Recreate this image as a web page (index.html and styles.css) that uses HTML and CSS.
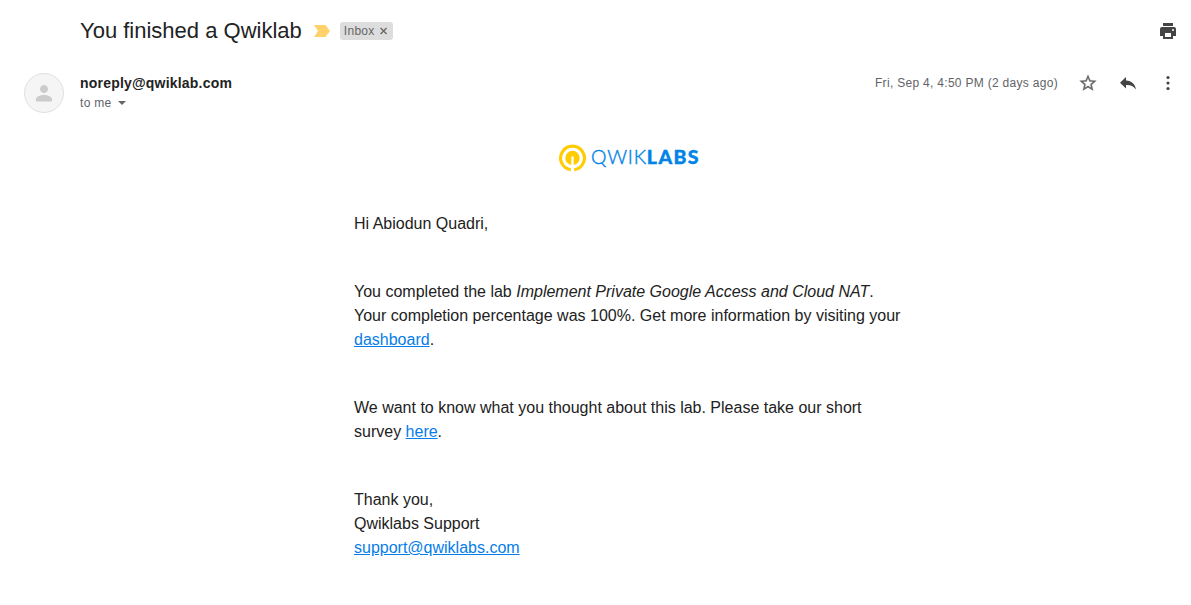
FILE: index.html
```html
<!DOCTYPE html>
<html lang="en">
<head>
<meta charset="utf-8">
<title>You finished a Qwiklab</title>
<link rel="stylesheet" href="styles.css">
</head>
<body>
<header class="subject">
  <h1>You finished a Qwiklab</h1>
  <svg class="marker" width="16" height="12" viewBox="0 0 16 12"><path d="M0 0h11.500L16 6l-4.500 6H0l4-6z" fill="#ffd26b"/></svg>
  <span class="label">Inbox <svg width="8" height="8" viewBox="0 0 8 8"><path d="M.6 1l6 6M6.600 1l-6 6" stroke="#666" stroke-width="1.300"/></svg></span>
  <svg class="print" width="20" height="20" viewBox="0 0 20 20"><path fill="#444" fill-rule="evenodd" d="M5 2h10v3H5zM4 6h12q2 0 2 2v7h-3v3H5v-3H2V8q0-2 2-2zM7 12v4h6v-4z"/><path fill="#ccc" d="M14 8h2v2h-2z"/></svg>
</header>
<section class="sender">
  <span class="avatar"><svg width="24" height="24" viewBox="0 0 24 24"><path fill="#ccc" d="M12 12c2.210 0 4-1.790 4-4s-1.790-4-4-4-4 1.790-4 4 1.790 4 4 4zm0 2c-2.670 0-8 1.340-8 4v2.500h16v-2.500c0-2.660-5.330-4-8-4z"/></svg></span>
  <div class="who">
    <strong>noreply@qwiklab.com</strong>
    <div class="to">to me <i class="caret"></i></div>
  </div>
  <div class="meta">
    <time>Fri, Sep 4, 4:50 PM (2 days ago)</time>
    <svg width="20" height="20" viewBox="0 0 24 24"><path fill="#666" stroke="#666" stroke-width=".3" d="M22 9.240l-7.190-.62L12 2 9.190 8.630 2 9.240l5.460 4.730L5.820 21 12 17.270 18.180 21l-1.630-7.030L22 9.240zM12 15.400l-3.760 2.270 1-4.280-3.320-2.880 4.380-.38L12 6.100l1.710 4.040 4.380.38-3.320 2.880 1 4.280L12 15.400z"/></svg>
    <svg width="20" height="20" viewBox="0 0 20 20"><path fill="#444" d="M8 7.500V4L2 9.700 8 15.500V12c4.500-.2 7.500 1 10 4.500-.8-5-4-8.700-10-9z"/></svg>
    <svg width="20" height="20" viewBox="0 0 20 20" fill="#444"><circle cx="10" cy="4.500" r="1.600"/><circle cx="10" cy="10" r="1.600"/><circle cx="10" cy="15.500" r="1.600"/></svg>
  </div>
</section>
<main class="message">
  <div class="logo">
    <svg width="28" height="28" viewBox="0 0 28 28" fill="none" stroke="#fc0"><path d="M12.800 25.800A11.900 11.900 0 1 1 16.200 25.800" stroke-width="3.100"/><circle cx="14.500" cy="14" r="7.200" fill="#fc0" stroke="none"/><path d="M14.500 12.500V22.500" stroke="#fff" stroke-width="2.400"/></svg>
    <span class="word"><span class="light">QWIK</span><b>LABS</b></span>
  </div>
  <p>Hi Abiodun Quadri,</p>
  <p>You completed the lab <em>Implement Private Google Access and Cloud NAT</em>.<br>Your completion percentage was 100%. Get more information by visiting your<br><a href="#">dashboard</a>.</p>
  <p>We want to know what you thought about this lab. Please take our short<br>survey <a href="#">here</a>.</p>
  <p>Thank you,<br>Qwiklabs Support<br><a href="#">support@qwiklabs.com</a></p>
</main>
</body>
</html>
```
FILE: styles.css
```css
body { margin: 0; background: #fff; color: #222; font-family: "Liberation Sans", Arial, sans-serif; height: 605px; overflow: hidden; }
svg { display: block; flex: none; }
.subject { display: flex; align-items: center; height: 28px; padding: 17px 13px 0 80px; }
h1 { margin: 0; font-size: 22px; font-weight: 400; line-height: 28px; white-space: nowrap; }
.marker { margin: 0 10px 0 12px; }
.label { display: flex; align-items: center; gap: 5px; height: 18px; padding: 0 5px 0 4px; background: #ddd; color: #666; border-radius: 3px; font-size: 12px; letter-spacing: .3px; }
.print { margin-left: auto; }
.sender { display: flex; padding: 28px 13px 0 24px; height: 40px; }
.avatar { width: 38px; height: 38px; border: 1px solid #e0e0e0; border-radius: 50%; background: #f5f5f5; display: grid; place-items: center; }
.who { margin-left: 16px; }
.who strong { display: block; font-size: 14px; line-height: 20px; letter-spacing: .2px; }
.to { display: flex; align-items: center; font-size: 12px; line-height: 20px; letter-spacing: .3px; color: #5f6368; }
.caret { border: 4px solid transparent; border-top-color: #666; border-bottom: 0; margin-left: 6px; }
.meta { display: flex; align-items: center; gap: 20px; height: 20px; margin-left: auto; color: #5f6368; font-size: 12px; letter-spacing: .3px; }
.message { width: 550px; margin: 31px 0 0 354px; font-size: 16px; line-height: 24px; white-space: nowrap; }
.logo { display: flex; align-items: center; gap: 5px; height: 28px; width: 142px; margin: 0 0 40px 204px; }
.word { display: flex; font-family: Lato, sans-serif; font-size: 19.500px; color: #0084e8; line-height: 26px; height: 28px; }
.light { font-weight: 300; letter-spacing: .8px; -webkit-text-stroke: .4px #0084e8; }
.word b { font-weight: 900; letter-spacing: 1.400px; -webkit-text-stroke: .4px #0084e8; }
.message p { margin: 0 0 44px; }
a { color: #067de9; }
```
